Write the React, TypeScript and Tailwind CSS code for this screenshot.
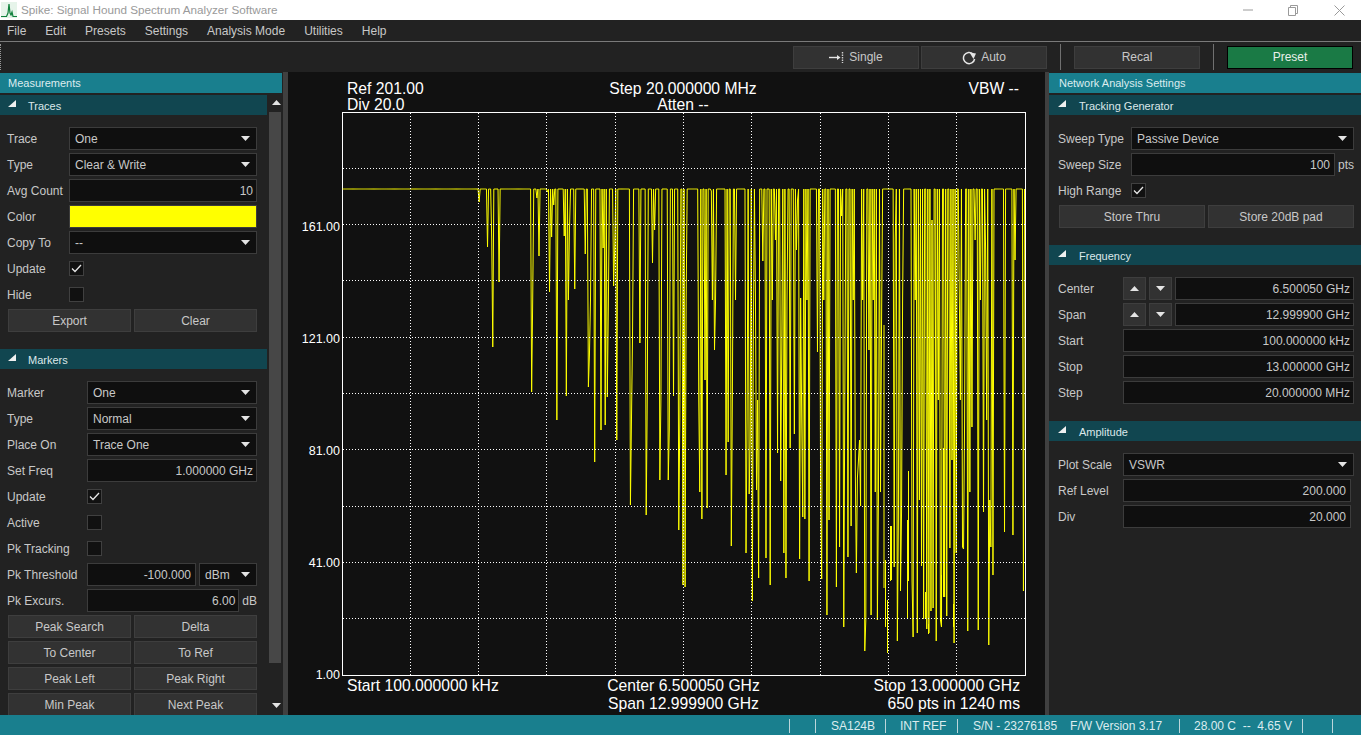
import type { ReactNode } from 'react'

const font = { fontFamily: '"Liberation Sans", Arial, sans-serif' }

// dips of the sweep, [page x, page y of the bottom]
const dips: number[][] = [
  [479, 202], [488, 247], [492, 240], [493, 347], [499, 282], [532, 392], [533, 300], [537, 198], [539, 256],
  [547, 192], [550, 292], [552, 237], [554, 205], [557, 420], [564, 236], [566, 396], [568, 300], [570, 229], [575, 289],
  [585, 254], [588, 387], [589, 355], [590, 330], [591, 300], [595, 462], [601, 430], [603, 248], [605, 425], [607, 397],
  [608, 306], [614, 286], [615, 250], [617, 440], [630, 505], [631, 420], [633, 337], [640, 343], [646, 515], [647, 400],
  [652, 327], [653, 263], [655, 230], [660, 480], [661, 400], [668, 480], [669, 430], [674, 396], [679, 530], [680, 420], [683, 585],
  [685, 587], [686, 300], [699, 400], [700, 492], [702, 519], [705, 380], [707, 508], [711, 191], [712, 300], [714, 568], [715, 350], [716, 300],
  [726, 475], [728, 442], [731, 546], [732, 400], [736, 610], [735, 300], [746, 553], [747, 420], [749, 494], [750, 440], [752, 601], [753, 330], [755, 300],
  [757, 490], [758, 400], [759, 578], [763, 261], [766, 558], [770, 585], [772, 300], [775, 240],
  [778, 453], [781, 481], [782, 350], [784, 553], [786, 578], [787, 300], [790, 448], [794, 434], [796, 250], [798, 200],
  [800, 559], [801, 298], [802, 420], [803, 517], [805, 519], [807, 300], [809, 581], [817, 352],
  [821, 500], [822, 579], [824, 300], [827, 615], [829, 520], [836, 587], [840, 547], [842, 216], [844, 627], [845, 400],
  [848, 557], [851, 526], [853, 300], [855, 470], [856, 573], [857, 478], [858, 460], [859, 478], [860, 440], [861, 506], [863, 300],
  [865, 651], [866, 620], [869, 350], [871, 615], [873, 300], [875, 492], [877, 620], [878, 500], [881, 492], [882, 319],
  [894, 567], [895, 238], [897, 641], [898, 520], [900, 591], [902, 512], [903, 300],
  [912, 581], [913, 637], [915, 300], [917, 633], [919, 500], [921, 566], [924, 619], [927, 629], [929, 633],
  [931, 611], [932, 220], [933, 608], [936, 641], [938, 400], [940, 620], [942, 627], [945, 597], [947, 616], [950, 548], [952, 460], [954, 643], [956, 553],
  [959, 300], [960, 400], [962, 547], [964, 549], [965, 420], [968, 631], [970, 492], [972, 427], [975, 240],
  [978, 630], [980, 300], [983, 512], [986, 250], [987, 420], [989, 645], [990, 500], [991, 547], [993, 575],
  [1005, 532], [1013, 535], [1015, 260], [1023, 591],
]

// pieces of the trace that hang free of the top line, [page x, top y, bottom y]
const floating: number[][] = [
  [884, 325, 588], [885.5, 560, 627], [887.5, 600, 653], [890.5, 526, 581], [891.5, 526, 580],
  [907.5, 520, 619], [908.5, 471, 581], [925.5, 592, 619], [928.5, 624, 634], [941.5, 575, 620],
  [943.5, 448, 597], [953.5, 604, 627],
]

const tracePoints = (() => {
  const step = 682 / 649
  const ys = new Array(650).fill(189)
  for (const [x, y] of dips) ys[Math.round((x - 342.5) / step)] = y
  return ys.map((y, i) => `${(342.5 + i * step).toFixed(2)},${y}`).join(' ')
})()

const floatingPath = floating.map(([x, a, b]) => `M${x} ${a}V${b}`).join('')

const gridX = [410.5, 478.5, 546.5, 615.5, 683.5, 751.5, 820.5, 888.5, 956.5]
const gridY = [168.5, 224.5, 280.5, 337.5, 393.5, 449.5, 506.5, 562.5, 618.5]

function Arrow({ up = false }: { up?: boolean }) {
  return (
    <svg width="9" height="5" viewBox="0 0 9 5" className="shrink-0">
      <path d={up ? 'M0 5L4.5 0L9 5Z' : 'M0 0L9 0L4.5 5Z'} fill="#e4e4e4" />
    </svg>
  )
}

function Label({ w, children }: { w: string; children: ReactNode }) {
  return <div className={`${w} shrink-0 whitespace-nowrap`}>{children}</div>
}

function Combo({ value, className = 'flex-1' }: { value: string; className?: string }) {
  return (
    <div className={`${className} h-[23px] flex items-center justify-between pl-[5px] pr-[6px] bg-[#0f0f0f] border border-[#3c3c3c]`}>
      <span>{value}</span>
      <Arrow />
    </div>
  )
}

function Field({ value, className = 'flex-1' }: { value: string; className?: string }) {
  return (
    <div className={`${className} h-[23px] flex items-center justify-end pr-[3px] bg-[#0f0f0f] border border-[#3c3c3c]`}>
      {value}
    </div>
  )
}

function Check({ on = false }: { on?: boolean }) {
  return (
    <div className="w-[15px] h-[15px] flex items-center justify-center bg-[#111111] border border-[#404040]">
      {on && (
        <svg width="11" height="9" viewBox="0 0 11 9">
          <path d="M1 4.5L4 7.5L10 1" fill="none" stroke="#e6e6e6" strokeWidth="1.3" />
        </svg>
      )}
    </div>
  )
}

function Btn({ children, className = '' }: { children: ReactNode; className?: string }) {
  return (
    <div className={`h-[23px] flex items-center justify-center bg-[#323232] border border-[#3e3e3e] ${className}`}>
      {children}
    </div>
  )
}

function Row({ label, w, children }: { label: string; w: string; children: ReactNode }) {
  return (
    <div className="h-[23px] flex items-center">
      <Label w={w}>{label}</Label>
      {children}
    </div>
  )
}

function SectionHeader({ title, right = false }: { title: string; right?: boolean }) {
  return (
    <div className="h-[20px] flex items-center bg-[#114650] text-[11px] text-[#dce8ea]">
      <svg
        width="8"
        height="7"
        viewBox="0 0 8 7"
        className={right ? 'ml-[9px] mr-[13px] mb-[3px]' : 'ml-[8px] mr-[12px] mb-[3px]'}
      >
        <path d="M0 7L8 0L8 7Z" fill="#f0f0f0" />
      </svg>
      <span className="mt-[2px]">{title}</span>
    </div>
  )
}

function PanelTitle({ title, className = '' }: { title: string; className?: string }) {
  return (
    <div className={`h-[20px] flex items-center bg-[#197f8e] text-[11px] text-[#dcecef] ${className}`}>{title}</div>
  )
}

function Traces() {
  const w = 'w-[62px]'
  return (
    <div className="flex flex-col gap-[3px] pt-[12px] pl-[7px] pr-[10px]">
      <Row label="Trace" w={w}><Combo value="One" /></Row>
      <Row label="Type" w={w}><Combo value="Clear & Write" /></Row>
      <Row label="Avg Count" w={w}><Field value="10" /></Row>
      <Row label="Color" w={w}><div className="flex-1 h-[23px] bg-[#ffff00] border border-[#3c3c3c]" /></Row>
      <Row label="Copy To" w={w}><Combo value="--" /></Row>
      <Row label="Update" w={w}><Check on /></Row>
      <Row label="Hide" w={w}><Check /></Row>
      <div className="grid grid-cols-2 gap-[3px] pl-px">
        <Btn>Export</Btn>
        <Btn>Clear</Btn>
      </div>
    </div>
  )
}

function Markers() {
  const w = 'w-[80px]'
  return (
    <div className="flex flex-col gap-[3px] pt-[12px] pl-[7px] pr-[10px]">
      <Row label="Marker" w={w}><Combo value="One" /></Row>
      <Row label="Type" w={w}><Combo value="Normal" /></Row>
      <Row label="Place On" w={w}><Combo value="Trace One" /></Row>
      <Row label="Set Freq" w={w}><Field value="1.000000 GHz" /></Row>
      <Row label="Update" w={w}><Check on /></Row>
      <Row label="Active" w={w}><Check /></Row>
      <Row label="Pk Tracking" w={w}><Check /></Row>
      <Row label="Pk Threshold" w={w}>
        <Field value="-100.000" className="w-[109px] pr-[4px]" />
        <Combo value="dBm" className="w-[58px] ml-[3px]" />
      </Row>
      <Row label="Pk Excurs." w={w}>
        <Field value="6.00" className="w-[154px]" />
        <span className="ml-[3px]">dB</span>
      </Row>
      <div className="grid grid-cols-2 gap-[3px] pl-px">
        <Btn>Peak Search</Btn>
        <Btn>Delta</Btn>
        <Btn>To Center</Btn>
        <Btn>To Ref</Btn>
        <Btn>Peak Left</Btn>
        <Btn>Peak Right</Btn>
        <Btn>Min Peak</Btn>
        <Btn>Next Peak</Btn>
      </div>
    </div>
  )
}

function LeftPanel() {
  return (
    <div className="w-[283px] shrink-0 flex flex-col pt-px">
      <PanelTitle title="Measurements" className="w-[282px] pl-[8px]" />
      <div className="flex flex-1 min-h-0 pt-[2px]">
        <div className="w-[267px] overflow-hidden">
          <SectionHeader title="Traces" />
          <Traces />
          <div className="mt-[17px]">
            <SectionHeader title="Markers" />
          </div>
          <Markers />
        </div>
        {/* scrollbar */}
        <div className="w-[14px] ml-[2px] flex flex-col">
          <div className="h-[17px] flex items-center justify-center pb-[3px]"><Arrow up /></div>
          <div className="h-[551px] w-[12px] bg-[#474747]" />
          <div className="flex-1 flex items-end justify-center pb-[7px]"><Arrow /></div>
        </div>
      </div>
    </div>
  )
}

function Plot() {
  return (
    <svg width="684" height="564" viewBox="342 112 684 564" className="block shrink-0">
      <rect x="342.5" y="112.5" width="683" height="563" fill="none" stroke="#ffffff" />
      <polyline points={tracePoints} fill="none" stroke="#ffff00" strokeWidth="1" />
      <path d={floatingPath} fill="none" stroke="#ffff00" strokeWidth="1" />
      {gridX.map((x) => (
        <line key={x} x1={x} x2={x} y1="113" y2="675" stroke="#ffffff" strokeDasharray="1 2" />
      ))}
      {gridY.map((y) => (
        <line key={y} x1="343" x2="1025" y1={y} y2={y} stroke="#ffffff" strokeDasharray="1 2" />
      ))}
    </svg>
  )
}

function Center() {
  const labels = ['161.00', '121.00', '81.00', '41.00', '1.00']
  return (
    <div className="w-[757px] shrink-0 bg-[#111111] text-white text-[15.7px] leading-[16px] pt-[9px] pl-[54px]">
      <div className="w-[684px] h-[31px] grid grid-cols-3 pl-[5px] pr-[7px]">
        <div>
          <div>Ref 201.00</div>
          <div>Div 20.0</div>
        </div>
        <div className="text-center">
          <div>Step 20.000000 MHz</div>
          <div>Atten --</div>
        </div>
        <div className="text-right">VBW --</div>
      </div>
      <div className="flex h-[564px] -ml-[54px]">
        <div className="w-[54px] pt-[107px] pr-[2px] text-right text-[12.5px]">
          {labels.map((l) => (
            <div key={l} className="h-[112px]">{l}</div>
          ))}
        </div>
        <Plot />
      </div>
      <div className="w-[684px] grid grid-cols-3 pl-[5px] pr-[6px] pt-px leading-[18px]">
        <div className="whitespace-nowrap">Start 100.000000 kHz</div>
        <div className="text-center whitespace-nowrap">
          <div>Center 6.500050 GHz</div>
          <div>Span 12.999900 GHz</div>
        </div>
        <div className="text-right whitespace-nowrap">
          <div>Stop 13.000000 GHz</div>
          <div>650 pts in 1240 ms</div>
        </div>
      </div>
    </div>
  )
}

function Stepper({ label, value }: { label: string; value: string }) {
  return (
    <Row label={label} w="w-[65px]">
      <div className="w-[23px] h-[23px] flex items-center justify-center bg-[#323232] border border-[#3e3e3e]"><Arrow up /></div>
      <div className="w-[23px] h-[23px] ml-[3px] flex items-center justify-center bg-[#323232] border border-[#3e3e3e]"><Arrow /></div>
      <Field value={value} className="ml-[3px] flex-1" />
    </Row>
  )
}

function RightPanel() {
  return (
    <div className="w-[312px] shrink-0 flex flex-col pt-px">
      <PanelTitle title="Network Analysis Settings" className="pl-[10px]" />
      <div className="pt-[2px]">
        <SectionHeader right title="Tracking Generator" />
        <div className="flex flex-col gap-[3px] pt-[12px] pl-[9px] pr-[7px]">
          <Row label="Sweep Type" w="w-[73px]"><Combo value="Passive Device" /></Row>
          <Row label="Sweep Size" w="w-[73px]">
            <Field value="100" className="w-[205px] pr-[4px]" />
            <span className="ml-[3px]">pts</span>
          </Row>
          <Row label="High Range" w="w-[73px]"><Check on /></Row>
          <div className="grid grid-cols-2 gap-[3px] pl-px">
            <Btn>Store Thru</Btn>
            <Btn>Store 20dB pad</Btn>
          </div>
        </div>
        <div className="mt-[17px]"><SectionHeader right title="Frequency" /></div>
        <div className="flex flex-col gap-[3px] pt-[12px] pl-[9px] pr-[7px]">
          <Stepper label="Center" value="6.500050 GHz" />
          <Stepper label="Span" value="12.999900 GHz" />
          <Row label="Start" w="w-[65px]"><Field value="100.000000 kHz" /></Row>
          <Row label="Stop" w="w-[65px]"><Field value="13.000000 GHz" /></Row>
          <Row label="Step" w="w-[65px]"><Field value="20.000000 MHz" /></Row>
        </div>
        <div className="mt-[17px]"><SectionHeader right title="Amplitude" /></div>
        <div className="flex flex-col gap-[3px] pt-[12px] pl-[9px] pr-[7px]">
          <Row label="Plot Scale" w="w-[65px]"><Combo value="VSWR" /></Row>
          <Row label="Ref Level" w="w-[65px]"><Field value="200.000" className="w-[228px] pr-[4px]" /></Row>
          <Row label="Div" w="w-[65px]"><Field value="20.000" className="w-[228px] pr-[4px]" /></Row>
        </div>
      </div>
    </div>
  )
}

function TitleBar() {
  return (
    <div className="h-[20px] shrink-0 bg-white flex items-center text-[#9a9a9a]">
      <svg width="16" height="16" viewBox="0 0 16 16" className="ml-px mr-[4px]">
        <rect width="16" height="16" fill="#e6f4ea" />
        <path d="M0 14.5H5.5L7 11L8 2L9 11L10 13L11 10L12 14.5H16" fill="none" stroke="#10803c" strokeWidth="1.2" />
      </svg>
      <span className="flex-1 text-[11.7px]">Spike: Signal Hound Spectrum Analyzer Software</span>
      <svg width="10" height="2" viewBox="0 0 10 2" className="mr-[35px]"><path d="M0 1H10" stroke="#9a9a9a" /></svg>
      <svg width="10" height="11" viewBox="0 0 10 11" className="mr-[36px]">
        <path d="M0.5 2.5H7.5V10.5H0.5ZM2.5 2.5V0.5H9.5V8.5H7.5" fill="none" stroke="#9a9a9a" />
      </svg>
      <svg width="11" height="11" viewBox="0 0 11 11" className="mr-[16px]">
        <path d="M0.5 0.5L10.5 10.5M10.5 0.5L0.5 10.5" stroke="#9a9a9a" />
      </svg>
    </div>
  )
}

function Toolbar() {
  return (
    <div className="h-[31px] shrink-0 flex items-center pr-[8px] bg-[#222222] border-t border-[#7a7a7a]">
      <div className="self-stretch my-[2px] border-l border-dotted border-[#999999]" />
      <div className="flex-1" />
      <Btn className="w-[126px]">
        <svg width="16" height="11" viewBox="0 0 16 11" className="mr-[4px]">
          <path d="M0 5.5H9" stroke="#e6e6e6" strokeWidth="1.4" />
          <path d="M8 3L11.5 5.5L8 8Z" fill="#e6e6e6" />
          <path d="M13.5 0V11" stroke="#d0d0d0" strokeDasharray="1.5 1" strokeWidth="1.4" />
        </svg>
        Single
      </Btn>
      <Btn className="w-[126px] ml-[2px]">
        <svg width="15" height="15" viewBox="0 0 15 15" className="mr-[4px]">
          <path d="M11 4A5.6 5.6 0 1 0 12.6 9" fill="none" stroke="#e6e6e6" strokeWidth="1.5" />
          <path d="M8 1.5L14.5 2.5L12 8Z" fill="#e6e6e6" transform="translate(-0.5 1)" />
        </svg>
        Auto
      </Btn>
      <div className="w-px h-[26px] ml-[13px] bg-[#707070]" />
      <Btn className="w-[126px] ml-[13px]">Recal</Btn>
      <div className="w-px h-[26px] ml-[13px] bg-[#707070]" />
      <div className="w-[126px] h-[23px] ml-[13px] flex items-center justify-center bg-[#1a7a45] border border-black text-[#e8f0ea]">
        Preset
      </div>
    </div>
  )
}

function StatusBar() {
  const cell = 'h-[14px] flex items-center border-l border-[#bcd6da] whitespace-pre'
  return (
    <div className="h-[20px] shrink-0 flex items-center pt-px pl-[789px] bg-[#197f8e] text-[#dcecef]">
      <div className={`${cell} w-[26px]`} />
      <div className={`${cell} w-[70px] pl-[15px]`}>SA124B</div>
      <div className={`${cell} w-[72px] pl-[14px]`}>INT REF</div>
      <div className={`${cell} w-[222px] pl-[15px]`}>
        S/N - 23276185<span className="ml-[13px]">F/W Version 3.17</span>
      </div>
      <div className={`${cell} w-[123px] pl-[14px]`}>28.00 C  --  4.65 V</div>
      <div className={`${cell} w-[31px] border-r`} />
    </div>
  )
}

export default function App() {
  return (
    <div style={font} className="w-[1361px] h-[735px] flex flex-col overflow-hidden bg-[#222222] text-[12px] text-[#c8c8c8]">
      <TitleBar />
      <div className="h-[21px] shrink-0 flex items-center gap-[19px] pl-[7px] bg-[#222222]">
        {['File', 'Edit', 'Presets', 'Settings', 'Analysis Mode', 'Utilities', 'Help'].map((m) => (
          <span key={m}>{m}</span>
        ))}
      </div>
      <Toolbar />
      <div className="flex-1 min-h-0 flex">
        <LeftPanel />
        <div className="w-[5px] shrink-0 bg-[#404040]" />
        <Center />
        <div className="w-[4px] shrink-0 bg-[#404040]" />
        <RightPanel />
      </div>
      <StatusBar />
    </div>
  )
}
